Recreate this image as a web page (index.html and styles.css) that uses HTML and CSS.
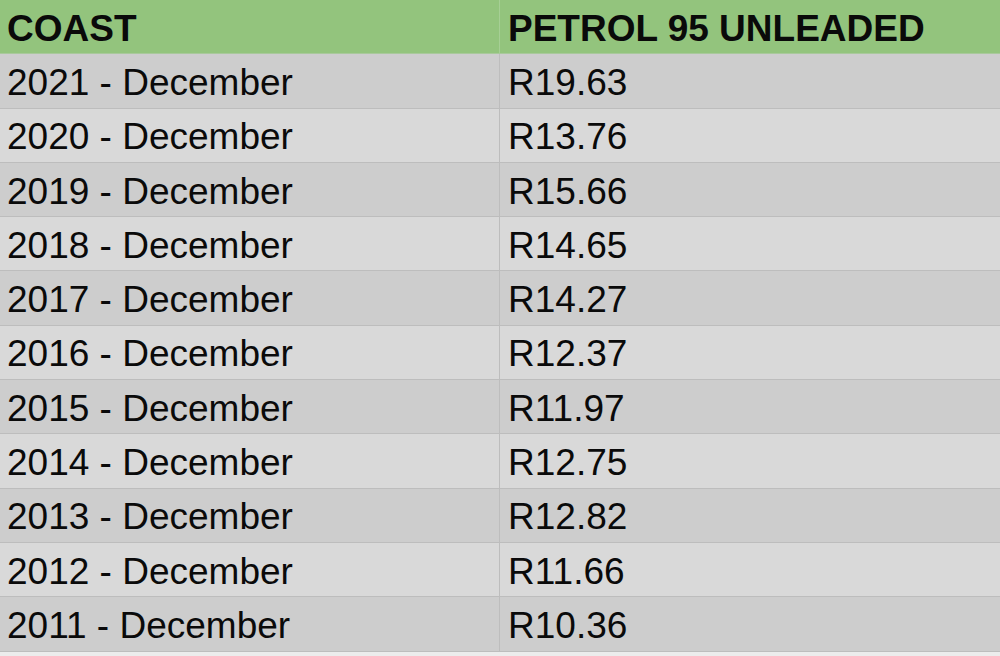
FILE: index.html
```html
<!DOCTYPE html>
<html>
<head>
<meta charset="utf-8">
<link rel="stylesheet" href="styles.css">
</head>
<body>
<div class="sheet">
  <div class="row head"><div class="cell c1">COAST</div><div class="cell c2">PETROL 95 UNLEADED</div></div>
  <div class="row dark"><div class="cell c1">2021 - December</div><div class="cell c2">R19.63</div></div>
  <div class="row light"><div class="cell c1">2020 - December</div><div class="cell c2">R13.76</div></div>
  <div class="row dark"><div class="cell c1">2019 - December</div><div class="cell c2">R15.66</div></div>
  <div class="row light"><div class="cell c1">2018 - December</div><div class="cell c2">R14.65</div></div>
  <div class="row dark"><div class="cell c1">2017 - December</div><div class="cell c2">R14.27</div></div>
  <div class="row light"><div class="cell c1">2016 - December</div><div class="cell c2">R12.37</div></div>
  <div class="row dark"><div class="cell c1">2015 - December</div><div class="cell c2">R11.97</div></div>
  <div class="row light"><div class="cell c1">2014 - December</div><div class="cell c2">R12.75</div></div>
  <div class="row dark"><div class="cell c1">2013 - December</div><div class="cell c2">R12.82</div></div>
  <div class="row light"><div class="cell c1">2012 - December</div><div class="cell c2">R11.66</div></div>
  <div class="row dark"><div class="cell c1">2011 - December</div><div class="cell c2">R10.36</div></div>
</div>
</body>
</html>
```
FILE: styles.css
```css
html, body {
  margin: 0;
  padding: 0;
  background: #ececec;
}
body {
  width: 1000px;
  height: 656px;
  overflow: hidden;
  font-family: "Liberation Sans", Arial, sans-serif;
  color: #0a0a0a;
}
.sheet {
  display: flex;
  flex-direction: column;
}
.row {
  display: flex;
  height: 53.3px;
  border-bottom: 1px solid #bdbdbd;
}
.head {
  background: #93c47d;
  font-weight: bold;
  border-bottom-color: #a9c99c;
}
.dark { background: #cdcdcd; }
.light { background: #d9d9d9; }
.cell {
  display: flex;
  align-items: center;
  font-size: 37px;
  padding-left: 7px;
  padding-top: 4px;
  box-sizing: border-box;
}
.c1 {
  width: 500px;
  border-right: 1px solid #bdbdbd;
}
.head .c1 { border-right-color: #a6cf95; }
.c2 {
  flex: 1;
  padding-left: 8px;
}
```
